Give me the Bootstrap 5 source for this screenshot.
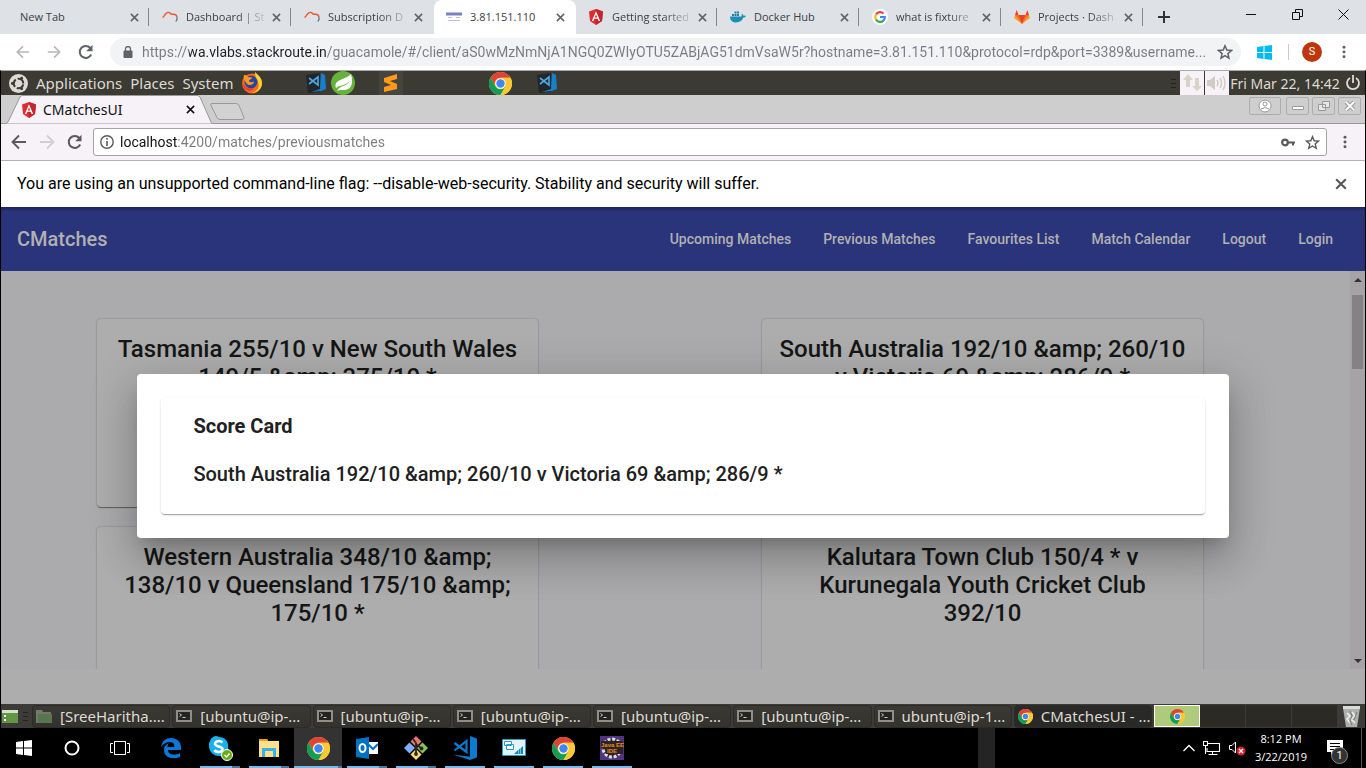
<!DOCTYPE html>
<html lang="en">
<head>
<meta charset="utf-8">
<meta name="viewport" content="width=device-width, initial-scale=1">
<title>CMatchesUI</title>
<link rel="stylesheet" href="https://cdn.jsdelivr.net/npm/bootstrap@5.3.0/dist/css/bootstrap.min.css">
<style>
  body { font-family: Roboto, "Noto Sans", sans-serif; height: 100vh; background: #000; overflow: hidden; }
  button { border: 0; padding: 0; background: none; color: inherit; display: inline-flex; align-items: center; justify-content: center; }
  svg { display: block; flex: none; }
  a { color: inherit; text-decoration: none; }

  /* outer browser */
  .host-tabs { height: 34px; background: #dee1e6; padding-left: 8px; color: #3c4043; font: 11px "Open Sans", sans-serif; }
  .host-tab { flex: 0 1 142px; min-width: 0; padding: 0 8px 0 12px; gap: 8px; border-right: 1px solid transparent; position: relative; }
  .host-tab .caption { flex: 1; overflow: hidden; white-space: nowrap; line-height: 18px; }
  .host-tab .fade-end { -webkit-mask-image: linear-gradient(90deg, #000 65%, transparent 105%); mask-image: linear-gradient(90deg, #000 65%, transparent 105%); }
  .host-tab.divided::after { content: ""; position: absolute; right: 0; top: 8px; height: 18px; width: 1px; background: #84878c; }
  .host-tab.current { background: #fff; border-radius: 8px 8px 0 0; }
  .host-tab button { width: 14px; height: 18px; margin-left: -4px; color: #5f6368; }
  .new-tab { margin-left: 14px; }
  .win-controls { color: #111; }
  .win-controls button { width: 46px; height: 28px; }
  .host-bar { height: 36px; background: #fff; padding: 0 12px; color: #5f6368; }
  .host-url { height: 28px; background: #f1f3f4; border-radius: 14px; padding: 0 8px 0 12px; }
  .bar-rule { width: 1px; height: 16px; background: #c8cacd; margin: 0 13px 0 16px; }
  .url-input { border: 0; outline: 0; background: transparent; padding: 0; min-width: 0; flex: 1; font: 14px Roboto, sans-serif; color: #777c82; text-overflow: ellipsis; }
  .host-url .url-input { background: linear-gradient(90deg, #777c82 47px, #202124 47px, #202124 184px, #777c82 184px); -webkit-background-clip: text; background-clip: text; -webkit-text-fill-color: transparent; }
  .inner-url .url-input { background: linear-gradient(90deg, #111 57px, #7c7b7d 57px); -webkit-background-clip: text; background-clip: text; -webkit-text-fill-color: transparent; }
  .avatar { width: 20px; height: 20px; border-radius: 50%; background: #bf360c; color: #fff; font-size: 11px; }
  .idle { color: #b6b7b9; }

  /* remote desktop */
  .remote { border-left: 1px solid #000; border-right: 1px solid #000; border-top: 1px solid #a9a9a9; min-height: 0; }
  .mate-top, .inner-tabs, .inner-bar, .infobar, .app-nav, .mate-bottom { flex: none; }
  .mate-top { height: 24px; background: #3b3a33; color: #dfdbd2; font: 15px "Noto Sans", sans-serif; }
  .mate-top .clock { font-size: 14px; width: 112px; text-align: center; white-space: nowrap; }
  .tray { width: 24px; height: 24px; background: #f7f2f7; }
  .inner-tabs { height: 29px; background: #cecece; border-bottom: 1px solid #999; }
  .inner-tab { width: 204px; height: 29px; position: relative; margin-left: 5px; padding: 0 15px; gap: 6px; color: #111; font: 14px "Noto Sans", sans-serif; }
  .inner-tab > svg.shape { position: absolute; left: 0; top: 0; }
  .inner-tab > :not(.shape) { position: relative; }
  .frame-set { padding: 2px 4px 0 0; gap: 3px; }
  .frame-btn { height: 18px; width: 23px; border: 1px solid #adadad; border-radius: 2px; }
  .frame-btn.wide { width: 32px; margin-right: 2px; }
  .inner-bar { height: 37px; background: #f7f2f7; border-bottom: 1px solid #b5b2b5; padding: 0 10px; color: #5a5a5a; }
  .inner-nav { gap: 12px; margin-right: 10px; }
  .inner-nav .idle { color: #d2cfd2; }
  .inner-url { height: 28px; background: #fff; border: 1px solid #a5a3a6; border-radius: 3px; padding: 0 6px; gap: 6px; }
  .infobar { height: 46px; background: #fff; padding: 0 18px 0 16px; color: #000; font-size: 16px; }

  /* application page */
  .app { background: #adadad; min-height: 0; position: relative; padding-bottom: 35px; font-weight: 500; }
  .app-nav { height: 64px; background: #2a347a; color: #b1b0b2; padding: 0 32px 0 16px; gap: 32px; font-size: 14px; box-shadow: inset 0 3px 3px -1px #1c2452; }
  .app-nav .brand { font-size: 20px; }
  .scroller { background: #abaaac; min-height: 0; overflow: hidden; flex: 1 1 0; }
  .match-grid { flex: 1; min-width: 0; display: grid; grid-template-columns: 1fr 1fr; column-gap: 224px; row-gap: 20px; padding: 48px 147px 0 96px; }
  .match-card { min-height: 188px; padding: 16px 17px; border-radius: 4px; background: #adadad; text-align: center; font-size: 24px; line-height: 28px; color: #151716; box-shadow: 0 2px 1px -1px rgba(0,0,0,.25), 0 1px 1px 0 rgba(0,0,0,.18), 0 0 2px 0 rgba(0,0,0,.3); }
  .match-card h2, .score-card h1, .score-card p { font: inherit; margin: 0; }
  .track { flex: none; width: 15px; background: #a5a3a6; padding: 5px 0 4px; }
  .thumb { width: 11px; height: 74px; background: #848285; margin-top: 11px; }
  .dialog-layer { position: absolute; inset: 0; }
  .dialog-box { width: 80%; padding: 24px; background: #fff; border-radius: 4px; box-shadow: 0 11px 15px -7px rgba(0,0,0,.2), 0 24px 38px 3px rgba(0,0,0,.14), 0 9px 46px 8px rgba(0,0,0,.12); }
  .score-card { padding: 16px 32px 28px; border-radius: 4px; font-size: 20px; line-height: 24px; color: #212121; box-shadow: 0 2px 1px -1px rgba(0,0,0,.2), 0 1px 1px 0 rgba(0,0,0,.14), 0 1px 3px 0 rgba(0,0,0,.12); }
  .score-card h1 { font-weight: 700; margin-bottom: 24px; }

  /* remote window list */
  .mate-bottom { height: 24px; background: #3c3b37; color: #dfdbd2; font: 15px "Noto Sans", sans-serif; }
  .win-task { flex: 1 1 0; min-width: 0; height: 23px; margin-right: 2px; padding: 0 3px; gap: 8px; border: 1px solid #2b2b27; border-radius: 4px; background: linear-gradient(#3a3934, #33322d); justify-content: flex-start; white-space: nowrap; overflow: hidden; }
  .win-task.current { background: #292a28; }
  .desk { width: 46px; height: 22px; background: #2b2a25; border-right: 1px solid #3c3b37; }
  .desk.current { background: #aecb7c; border: 1px solid #fff; }

  /* host taskbar */
  .taskbar { height: 40px; flex: none; background: #000; color: #fff; }
  .taskbar .tb { width: 48px; height: 40px; position: relative; margin-right: 1px; }
  .taskbar .sys { margin-right: 0; }
  .tb.running::after { content: ""; position: absolute; bottom: 0; left: 4px; right: 4px; height: 2px; background: #76b9ed; }
  .tb.many::after { background: linear-gradient(90deg, #76b9ed 80%, #4c7799 80%); }
  .tb.current { background: #333; }
  .tb.current::after { left: 0; right: 0; background: linear-gradient(90deg, #76b9ed 92%, #4c7799 92%); }
  .peek { width: 17px; height: 40px; background: #242424; margin-right: 188px; }
  .host-clock { font: 11px "Open Sans", sans-serif; line-height: 18px; text-align: center; width: 62px; }
  .notes-btn { width: 45px; height: 40px; }
  .notice { position: absolute; left: 19px; top: 19px; width: 17px; height: 17px; border-radius: 50%; background: #333; border: 1px solid #888; font-size: 11px; line-height: 15px; }
  .edge { border-right: 1px solid #555; width: 5px; height: 40px; margin-right: 4px; }
</style>
</head>
<body class="d-flex flex-column">

<svg width="0" height="0" class="position-absolute" aria-hidden="true">
  <symbol id="x" viewBox="0 0 10 10"><path d="M1 1l8 8M9 1L1 9" stroke="currentColor" stroke-width="1.700" fill="none"/></symbol>
  <symbol id="angular" viewBox="0 0 16 16"><path d="M8 0l7 2.500-1 9.500-6 4-6-4L1 2.500z" fill="#dd2c32"/><path d="M8 0l7 2.500-1 9.500-6 4z" fill="#c3272d"/><path d="M8 2.200L3.800 12h1.600l.9-2.200h3.400l.9 2.200h1.600zM8 5.200l1.200 3.200H6.800z" fill="#fff" fill-rule="evenodd"/></symbol>
  <symbol id="chrome" viewBox="0 0 24 24"><circle cx="12" cy="12" r="12" fill="#fbc934"/><path d="M1.600 6A12 12 0 0 1 22.400 6H12a6 6 0 0 0-5.200 9z" fill="#dc4437"/><path d="M1.600 6A12 12 0 0 0 12 24l5.200-9a6 6 0 0 1-10.400 0z" fill="#109d58"/><path d="M22.400 6H12a6 6 0 0 1 5.200 9L12 24A12 12 0 0 0 22.400 6z" fill="#fbc934"/><circle cx="12" cy="12" r="5.400" fill="#fff"/><circle cx="12" cy="12" r="4.400" fill="#4285f4"/></symbol>
  <symbol id="curve" viewBox="0 0 16 16"><path d="M.5 8.500C2 8 2.500 6 4 4.500S7.500 3 8.500 4.500 10.500 5 12 5.200s3 1.300 3 3.300" fill="none" stroke="#f0562d" stroke-width="1.400"/><path d="M15 8.500v2l-1.200 2" fill="none" stroke="#38808f" stroke-width="1.300"/></symbol>
  <symbol id="code" viewBox="0 0 24 24"><path d="M17 0l7 2.500v19L17 24 0 18.500l17 2.300z" fill="#0a7bd0"/><path d="M1.500 7L13.500 16V5L1.500 14.500" fill="none" stroke="#0a7bd0" stroke-width="2.200"/></symbol>
  <symbol id="codebox" viewBox="0 0 22 22"><path d="M1 3l14-2v19l-12 1z" fill="#22262a"/><path d="M16 1l4 2 1 14-5 2-10 1 9-3z" fill="#1581c9"/><path d="M4 6l9 7V5l-9 7" fill="none" stroke="#4aa8e4" stroke-width="1.600"/></symbol>
  <symbol id="term" viewBox="0 0 16 14"><path fill="#8f8f88" d="M0 1h16v12H0z"/><path fill="#242522" d="M2 3h12v8H2z"/><path d="M3.500 4.500l2 1.500-2 1.500M6.500 8.500h3" stroke="#ccc" fill="none"/></symbol>
  <symbol id="reload" viewBox="0 0 16 16"><path d="M13.200 10.500A6 6 0 1 1 12.300 4" fill="none" stroke="currentColor" stroke-width="2"/><path d="M14.500.8v6.400H8.200z" fill="currentColor"/></symbol>
  <symbol id="back" viewBox="0 0 16 16"><path d="M15 8H2M8 1.500L1.500 8 8 14.500" fill="none" stroke="currentColor" stroke-width="1.900"/></symbol>
  <symbol id="fwd" viewBox="0 0 16 16"><path d="M1 8h13M8 1.500L14.500 8 8 14.500" fill="none" stroke="currentColor" stroke-width="1.900"/></symbol>
  <symbol id="star" viewBox="0 0 16 16"><path d="M8 1.800l1.800 4.300 4.700.4-3.600 3.100 1.100 4.600L8 11.700l-4 2.500 1.100-4.600L1.500 6.500l4.700-.4z" fill="none" stroke="currentColor" stroke-width="1.500"/></symbol>
  <symbol id="dots" viewBox="0 0 4 16"><g fill="currentColor"><circle cx="2" cy="2.500" r="1.700"/><circle cx="2" cy="8" r="1.700"/><circle cx="2" cy="13.500" r="1.700"/></g></symbol>
</svg>

<header>
  <div class="host-tabs d-flex align-items-stretch">
    <div class="host-tab divided d-flex align-items-center"><a href="#" class="caption">New Tab</a><button aria-label="Close"><svg width="9" height="9"><use href="#x"/></svg></button></div>
    <div class="host-tab divided d-flex align-items-center"><svg width="16" height="16"><use href="#curve"/></svg><a href="#" class="caption fade-end">Dashboard | St</a><button aria-label="Close"><svg width="9" height="9"><use href="#x"/></svg></button></div>
    <div class="host-tab d-flex align-items-center"><svg width="16" height="16"><use href="#curve"/></svg><a href="#" class="caption fade-end">Subscription D</a><button aria-label="Close"><svg width="9" height="9"><use href="#x"/></svg></button></div>
    <div class="host-tab current d-flex align-items-center"><svg width="16" height="16" viewBox="0 0 16 16"><path d="M0 5h16" stroke="#7683c1" stroke-width="3"/><path d="M2 8.500h4M10 8.500h4M2 11.500h12" stroke="#bdc2dc"/></svg><a href="#" class="caption">3.81.151.110</a><button aria-label="Close"><svg width="9" height="9"><use href="#x"/></svg></button></div>
    <div class="host-tab divided d-flex align-items-center"><svg width="16" height="16"><use href="#angular"/></svg><a href="#" class="caption fade-end">Getting started</a><button aria-label="Close"><svg width="9" height="9"><use href="#x"/></svg></button></div>
    <div class="host-tab divided d-flex align-items-center"><svg width="16" height="16" viewBox="0 0 16 16"><path d="M0 7.500h11.500c.3-1.200 0-2 .6-2.800.8.500 1.200 1.200 1.300 2 1-.2 1.800 0 2.500.4-.5 1.200-1.500 1.500-2.500 1.500C12 12 9.500 13.500 6 13.500c-4 0-6-2.500-6-6z" fill="#1b8fb5"/><path d="M2 5h2v2H2zM4.500 5h2v2h-2zM7 5h2v2H7zM7 2.500h2v2H7zM4.500 2.500h2v2h-2z" fill="#2b7f9e"/></svg><a href="#" class="caption">Docker Hub</a><button aria-label="Close"><svg width="9" height="9"><use href="#x"/></svg></button></div>
    <div class="host-tab divided d-flex align-items-center"><svg width="16" height="16" viewBox="0 0 16 16"><circle cx="8" cy="8" r="8" fill="#fff"/><g fill="none" stroke-width="2.200"><path d="M4 5.500A4.800 4.800 0 0 1 11.500 4.500" stroke="#ea4335"/><path d="M4 5.500a4.800 4.800 0 0 0 0 5" stroke="#fbbc05"/><path d="M4 10.500a4.800 4.800 0 0 0 7.400 1.100" stroke="#34a853"/><path d="M11.400 11.600A4.600 4.600 0 0 0 12.800 8H8" stroke="#4285f4"/></g></svg><a href="#" class="caption fade-end">what is fixture</a><button aria-label="Close"><svg width="9" height="9"><use href="#x"/></svg></button></div>
    <div class="host-tab divided d-flex align-items-center"><svg width="16" height="16" viewBox="0 0 16 16"><path d="M8 15L0 9l1-3h14l1 3z" fill="#fca326"/><path d="M8 15L1 6h3.500zM8 15l7-9h-3.500z" fill="#fc6d26"/><path d="M8 15L4.500 6h7zM1 6l1.700-5 1.800 5zM15 6l-1.700-5-1.800 5z" fill="#e24329"/></svg><a href="#" class="caption fade-end">Projects · Dash</a><button aria-label="Close"><svg width="9" height="9"><use href="#x"/></svg></button></div>
    <button class="new-tab" aria-label="New tab"><svg width="12" height="12" viewBox="0 0 12 12"><path d="M6 0v12M0 6h12" stroke="#333" stroke-width="2"/></svg></button>
    <div class="win-controls d-flex ms-auto">
      <button aria-label="Minimise"><svg width="10" height="10"><path d="M0 5.500h10" stroke="currentColor"/></svg></button>
      <button aria-label="Restore"><svg width="11" height="11"><path d="M.5 3.500h7v7h-7zM3.500 3V.5h7v7H8" fill="none" stroke="currentColor"/></svg></button>
      <button aria-label="Close"><svg width="11" height="11"><path d="M.5.5l10 10M10.500.5l-10 10" stroke="currentColor"/></svg></button>
    </div>
  </div>
  <div class="host-bar d-flex align-items-center">
    <button class="me-3 ms-1 idle" aria-label="Back"><svg width="14" height="14"><use href="#back"/></svg></button>
    <button class="me-3 idle" aria-label="Forward"><svg width="16" height="14"><use href="#fwd"/></svg></button>
    <button class="me-3" aria-label="Reload"><svg width="16" height="16"><use href="#reload"/></svg></button>
    <div class="host-url d-flex align-items-center flex-fill gap-2">
      <svg width="12" height="12" viewBox="0 0 12 12"><path d="M2 5h8v6.500H2z" fill="#5f6368" stroke="#5f6368"/><path d="M3.500 5V3a2.500 2.500 0 0 1 5 0v2" fill="none" stroke="#5f6368" stroke-width="1.300"/></svg>
      <input class="url-input" type="text" aria-label="Address" value="https://wa.vlabs.stackroute.in/guacamole/#/client/aS0wMzNmNjA1NGQ0ZWIyOTU5ZABjAG51dmVsaW5r?hostname=3.81.151.110&amp;protocol=rdp&amp;port=3389&amp;username...">
      <button aria-label="Bookmark"><svg width="16" height="16"><use href="#star"/></svg></button>
    </div>
    <svg class="ms-3 ps-0" width="15" height="15" viewBox="0 0 15 15"><path d="M0 2l6.500-1v6H0zM7.500.9L15 0v7H7.500zM0 8h6.500v6L0 13zM7.500 8H15v7l-7.500-1z" fill="#00bcf2"/></svg>
    <span class="bar-rule"></span>
    <button class="avatar me-3" aria-label="Profile">S</button>
    <button class="ms-1 me-2" aria-label="Menu"><svg width="4" height="14"><use href="#dots"/></svg></button>
  </div>
</header>

<div class="remote d-flex flex-column flex-fill">
  <div class="mate-top d-flex align-items-center">
    <svg class="ms-2 me-2" width="19" height="19" viewBox="0 0 20 20"><circle cx="10" cy="10" r="10" fill="#dfdbd2"/><circle cx="10" cy="10" r="5" fill="none" stroke="#3b3a33" stroke-width="2.200" stroke-dasharray="8.500 2" stroke-dashoffset="-1"/><g fill="#3b3a33"><circle cx="3.500" cy="10" r="1.500"/><circle cx="13.300" cy="4.400" r="1.500"/><circle cx="13.300" cy="15.600" r="1.500"/></g></svg>
    <a href="#">Applications</a><a href="#" class="ms-2">Places</a><a href="#" class="ms-2">System</a>
    <svg class="ms-2" width="22" height="22" viewBox="0 0 22 22"><circle cx="11" cy="11.500" r="10" fill="#ff6a1a"/><path d="M14 0c3 3 7.500 6 7 12-.5 5-5 9-10 9 6-2 8-6 6-11-1-3-3-5-3-10z" fill="#ffd02b"/><circle cx="10" cy="10" r="6.500" fill="#27479f"/><path d="M3 3c2 0 3 .5 4 2l4 .5c0 2-3 2-3 3 0 2 3 2 5 1 0 4-6 5-8 1-2-2-3-4-2-7.500z" fill="#ff9522"/><path d="M1 9c2 7 7 8 12 7-3 5-11 4-12-7z" fill="#ed3e32"/></svg>
    <svg style="margin-left:42px" width="22" height="22"><use href="#codebox"/></svg>
    <svg class="ms-1" width="24" height="24" viewBox="0 0 24 24"><circle cx="12" cy="12" r="12" fill="#66b33b"/><path d="M20 3c2 8 2 16-8 16-3 0-5 0-6 1 3-6 9-4 13-10-5 5-10 4-14 7C2 8 15 9 20 3z" fill="#fff"/></svg>
    <svg style="margin-left:24px" width="24" height="24" viewBox="0 0 24 24"><path d="M0 0h24v24H0z" fill="#45443f"/><path d="M5 7l13-4v5l-7 2 7 3v5L5 21v-5l7-2-7-3z" fill="#ff9a1a"/></svg>
    <svg style="margin-left:86px" width="23" height="23"><use href="#chrome"/></svg>
    <svg style="margin-left:24px" width="22" height="22"><use href="#codebox"/></svg>
    <svg class="ms-auto me-1" width="5" height="10"><path d="M0 1.500h5M0 5.500h5M0 9.500h5" stroke="#24231f"/></svg>
    <span class="tray d-flex align-items-center justify-content-center"><svg width="20" height="18" viewBox="0 0 20 18"><path d="M6 0l5 6H8v7H4V6H1zM15 17l-5-5h3V4h4v8h3z" fill="#d8d2c9"/></svg></span>
    <span class="tray d-flex align-items-center justify-content-center" style="margin-left:1px"><svg width="20" height="18" viewBox="0 0 20 18"><path d="M0 6h3l5-4v14l-5-4H0z" fill="#d0cbc4"/><path d="M10 6q2 3 0 6M13 4q3 5 0 10M16 2q4 7 0 14" fill="none" stroke="#d0cbc4" stroke-width="1.500"/></svg></span>
    <span class="clock">Fri Mar 22, 14:42</span>
    <svg class="mx-1" width="16" height="16" viewBox="0 0 16 16"><path d="M5 3a6 6 0 1 0 6 0M8 0v8" fill="none" stroke="#dfdbd2" stroke-width="1.800"/></svg>
  </div>

  <div class="inner-tabs d-flex">
    <div class="inner-tab d-flex align-items-center">
      <svg class="shape" width="206" height="29" viewBox="0 0 206 29"><path d="M0 28.500L2 27 14 2Q15 .5 17 .5H191Q193 .5 194 2L205 27l1 1.500" fill="#f7f2f7" stroke="#999"/></svg>
      <svg width="16" height="16"><use href="#angular"/></svg><a href="#" class="flex-fill">CMatchesUI</a>
      <button aria-label="Close tab"><svg width="9" height="9"><use href="#x"/></svg></button>
    </div>
    <svg class="mt-2" width="36" height="18" viewBox="0 0 36 18"><path d="M2 .5h24q2 0 3 2l5 12q0 2-2 2H10q-2 0-3-2L1 2.500Q0 .5 2 .5z" fill="#d2d2d2" stroke="#999"/></svg>
    <div class="frame-set d-flex ms-auto">
      <button class="frame-btn wide" aria-label="User"><svg width="14" height="14" viewBox="0 0 14 14"><circle cx="7" cy="7" r="6" fill="#fff" stroke="#999"/><circle cx="7" cy="5" r="2" fill="none" stroke="#999"/><path d="M3 10q4-3 8 0" fill="none" stroke="#999"/></svg></button>
      <button class="frame-btn" aria-label="Minimise"><svg width="12" height="10"><path d="M.5 5.500h11v3H.5z" fill="#fff" stroke="#999"/></svg></button>
      <button class="frame-btn" aria-label="Restore"><svg width="12" height="10"><path d="M4.500.5h7v6h-7zM.5 3.500h7v6h-7z" fill="#fff" fill-opacity=".5" stroke="#999"/></svg></button>
      <button class="frame-btn" aria-label="Close"><svg width="12" height="10"><path d="M2 1l8 8M10 1L2 9" stroke="#999" stroke-width="4"/><path d="M2 1l8 8M10 1L2 9" stroke="#fff" stroke-width="2"/></svg></button>
    </div>
  </div>
  <div class="inner-bar d-flex align-items-center">
    <div class="inner-nav d-flex">
      <button aria-label="Back"><svg width="16" height="16"><use href="#back"/></svg></button>
      <button class="idle" aria-label="Forward"><svg width="16" height="16"><use href="#fwd"/></svg></button>
      <button aria-label="Reload"><svg width="16" height="16"><use href="#reload"/></svg></button>
    </div>
    <div class="inner-url d-flex align-items-center flex-fill me-3">
      <svg width="14" height="14" viewBox="0 0 14 14"><circle cx="7" cy="7" r="6.200" fill="none" stroke="#5a5a5a" stroke-width="1.400"/><path d="M7 6v5M7 3v1.700" stroke="#5a5a5a" stroke-width="1.600"/></svg>
      <input class="url-input" type="text" aria-label="Address" value="localhost:4200/matches/previousmatches">
      <svg class="me-1" width="14" height="9" viewBox="0 0 14 9"><circle cx="4" cy="4.500" r="2.800" fill="none" stroke="#5a5a5a" stroke-width="2.200"/><path d="M7 3.500h7v2h-1v2h-2v-2H7z" fill="#5a5a5a"/></svg>
      <button aria-label="Bookmark"><svg width="15" height="15"><use href="#star"/></svg></button>
    </div>
    <button aria-label="Menu" class="me-1 pe-1"><svg width="4" height="14"><use href="#dots"/></svg></button>
  </div>
  <div class="infobar d-flex align-items-center justify-content-between">
    <span>You are using an unsupported command-line flag: --disable-web-security. Stability and security will suffer.</span>
    <button aria-label="Dismiss" style="color:#555"><svg width="12" height="12"><use href="#x"/></svg></button>
  </div>

  <main class="app d-flex flex-column flex-fill">
    <nav class="app-nav d-flex align-items-center">
      <a href="#" class="brand me-auto">CMatches</a>
      <a href="#">Upcoming Matches</a><a href="#">Previous Matches</a><a href="#">Favourites List</a><a href="#">Match Calendar</a><a href="#">Logout</a><a href="#">Login</a>
    </nav>
    <div class="scroller d-flex">
      <div class="match-grid align-content-start">
        <article class="match-card"><h2>Tasmania 255/10 v New South Wales 149/5 &amp;amp; 375/10 *</h2></article>
        <article class="match-card"><h2>South Australia 192/10 &amp;amp; 260/10 v Victoria 69 &amp;amp; 286/9 *</h2></article>
        <article class="match-card"><h2>Western Australia 348/10 &amp;amp; 138/10 v Queensland 175/10 &amp;amp; 175/10 *</h2></article>
        <article class="match-card"><h2>Kalutara Town Club 150/4 * v Kurunegala Youth Cricket Club 392/10</h2></article>
      </div>
      <div class="track d-flex flex-column align-items-center">
        <svg width="8" height="8"><path d="M0 6l4-4 4 4z" fill="#333"/></svg>
        <div class="thumb"></div>
        <svg class="mt-auto" width="8" height="8"><path d="M0 2l4 4 4-4z" fill="#333"/></svg>
      </div>
    </div>
    <div class="dialog-layer d-flex align-items-center justify-content-center">
      <section class="dialog-box" role="dialog" aria-labelledby="score-title">
        <div class="score-card"><h1 id="score-title">Score Card</h1><p>South Australia 192/10 &amp;amp; 260/10 v Victoria 69 &amp;amp; 286/9 *</p></div>
      </section>
    </div>
  </main>

  <div class="mate-bottom d-flex align-items-center">
    <svg width="18" height="18" viewBox="0 0 18 18"><path d="M1 3h16v13H1z" fill="#629544"/><path d="M1 3h16v3H1z" fill="#d8e0c8"/><path d="M3 8h2v2H3zM3 12h2v2H3z" fill="#fff"/></svg>
    <svg class="mx-1" width="5" height="10"><path d="M0 1.500h5M0 5.500h5M0 9.500h5" stroke="#24231f"/></svg>
    <button class="win-task"><svg width="16" height="14" viewBox="0 0 16 14"><path d="M0 1h6l1 2h8v2H3v9H0z" fill="#6f7a68"/><path d="M2 5h14v9H2z" fill="#57764d"/></svg>[SreeHaritha....</button>
    <button class="win-task"><svg width="16" height="14"><use href="#term"/></svg>[ubuntu@ip-...</button>
    <button class="win-task"><svg width="16" height="14"><use href="#term"/></svg>[ubuntu@ip-...</button>
    <button class="win-task"><svg width="16" height="14"><use href="#term"/></svg>[ubuntu@ip-...</button>
    <button class="win-task"><svg width="16" height="14"><use href="#term"/></svg>[ubuntu@ip-...</button>
    <button class="win-task"><svg width="16" height="14"><use href="#term"/></svg>[ubuntu@ip-...</button>
    <button class="win-task"><svg width="16" height="14"><use href="#term"/></svg>ubuntu@ip-1...</button>
    <button class="win-task current"><svg width="15" height="15"><use href="#chrome"/></svg>CMatchesUI - ...</button>
    <button class="desk current" aria-label="Workspace 1"><svg width="15" height="15"><use href="#chrome"/></svg></button>
    <button class="desk" aria-label="Workspace 2"></button><button class="desk" aria-label="Workspace 3"></button><button class="desk" aria-label="Workspace 4"></button>
    <svg class="mx-1" width="19" height="22" viewBox="0 0 19 22"><path d="M1 3h17l-3 19H4z" fill="#aeb0ae"/><path d="M1 1h17v3H1z" fill="#d9dbd9"/><path d="M5 8l3 3-3 3 3 4M10 7l3 4-4 3 4 4" stroke="#eee" stroke-width="1.500" fill="none"/><path d="M8 6l2 5-2 5 2 4M15 7l-3 8" stroke="#777" fill="none"/></svg>
  </div>
</div>

<footer class="taskbar d-flex align-items-center">
  <button class="tb sys" aria-label="Start"><svg width="16" height="16" viewBox="0 0 16 16"><path d="M0 2l7-1v6.500H0zM8 1l8-1v7.500H8zM0 8.500h7V15l-7-1zM8 8.500h8V16l-8-1z" fill="#fff"/></svg></button>
  <button class="tb sys" aria-label="Cortana"><svg width="16" height="16"><circle cx="8" cy="8" r="6.500" fill="none" stroke="#fff" stroke-width="2"/></svg></button>
  <button class="tb sys" aria-label="Task view"><svg width="20" height="14"><path d="M4.500.5h11v13h-11zM3 2.500H.5v9H3M17 2.500h2.500v9H17" fill="none" stroke="#fff"/></svg></button>
  <button class="tb" style="margin-left:3px" aria-label="Edge"><svg width="20" height="20" viewBox="0 0 20 20"><path d="M0 9C1 3 5 0 10 0c6 0 10 4 10 9v3H7c0 5 7 6 12 3v4c-7 3-16 1-16-7 0-4 3-6 5-7-1 1-1.500 2-1.500 4H13.500C14 2 4 3 0 9z" fill="#0a78d7"/></svg></button>
  <button class="tb running many" aria-label="Skype"><svg width="26" height="26" viewBox="0 0 26 26"><path d="M3 6a6 6 0 0 1 9-4 9 9 0 0 1 9 11 6 6 0 0 1-8 8A10 10 0 0 1 2 11a7 7 0 0 1 1-5z" fill="#19b0f0"/><path d="M15.500 7.500C13 5 8 6 8 9s8 2 7.500 5.500C15 18 9 17.500 7.500 15" fill="none" stroke="#fff" stroke-width="2.500"/><circle cx="20" cy="20" r="5.500" fill="#6bac13" stroke="#fff"/><path d="M17.500 20l2 2 3-3.500" fill="none" stroke="#fff" stroke-width="1.400"/></svg></button>
  <button class="tb running many" aria-label="File Explorer"><svg width="22" height="20" viewBox="0 0 22 20"><path d="M1 1h8l1 2h11v16H1z" fill="#fbe18f"/><path d="M1 1h8l1 2H1z" fill="#e9a800"/><path d="M4 19v-9h14v9h-3v-6H7v6z" fill="#39b1e3"/></svg></button>
  <button class="tb running many current" aria-label="Chrome"><svg width="23" height="23"><use href="#chrome"/></svg></button>
  <button class="tb running many" aria-label="Outlook"><svg width="22" height="22" viewBox="0 0 22 22"><path d="M11 5h11v12H11z" fill="#fff"/><path d="M0 2l13-2v22L0 20z" fill="#0072c6"/><path d="M12 7l5 5 5-5" fill="none" stroke="#0072c6" stroke-width="2"/><ellipse cx="6.500" cy="11" rx="3" ry="4" fill="none" stroke="#fff" stroke-width="2"/></svg></button>
  <button class="tb running many" aria-label="Git"><svg width="24" height="24" viewBox="0 0 24 24"><path d="M12 0l5.500 5.500L12 11 6.500 5.500z" fill="#e87474"/><path d="M5.500 6.500L11 12l-5.500 5.500L0 12z" fill="#80aef8"/><path d="M18.500 6.500L24 12l-5.500 5.500L13 12z" fill="#87c35a"/><path d="M12 13l5.500 5.500L12 24l-5.500-5.500z" fill="#fbdc73"/><path d="M9 3l3 4v11M12 8l5 4" fill="none" stroke="#322" stroke-width="1.800"/><circle cx="12" cy="18" r="1.900" fill="#322"/><circle cx="17.500" cy="12.500" r="1.900" fill="#322"/></svg></button>
  <button class="tb running" aria-label="Code"><svg width="24" height="24"><use href="#code"/></svg></button>
  <button class="tb running" aria-label="Remote tool"><svg width="24" height="18" viewBox="0 0 24 18"><path d="M.5.5h23v16H.5z" fill="#e3f3f8" stroke="#2a9ac4"/><path d="M2.500 2.500h7v4h-7zM4.500 5.500h7v5h-7z" fill="#fff" stroke="#2a9ac4"/><path d="M12 15l4-4v4zM16.500 15v-4l1.500-1.500V15zM18.500 15V9.500L21 7v8z" fill="#1685b2"/></svg></button>
  <button class="tb running" aria-label="Chrome profile"><svg width="23" height="23"><use href="#chrome"/></svg></button>
  <button class="tb running" aria-label="Java EE IDE"><svg width="24" height="24" viewBox="0 0 24 24"><path d="M0 0h24v24H0z" fill="#51347f"/><circle cx="12" cy="12" r="9" fill="#292426" stroke="#ddd" stroke-width="3" stroke-dasharray="3 1.700"/><path d="M1 5h22v13H6v-6H1z" fill="#292426"/><g fill="#f08a1c" font-family="Liberation Sans" font-weight="700" font-size="6"><text x="1" y="11">Java EE</text><text x="7" y="17">IDE</text></g></svg></button>
  <div class="peek ms-auto"></div>
  <button aria-label="Show hidden icons"><svg width="12" height="8"><path d="M.5 7L6 1.500 11.500 7" fill="none" stroke="#fff" stroke-width="1.300"/></svg></button>
  <svg class="ms-2" width="18" height="15" viewBox="0 0 18 15"><path d="M5 2.500h11.500v8H4V7M9.500 11v2.500M5.500 13.500h9M.5.5h4v4h-4zM2.500 5v8" fill="none" stroke="#fff" stroke-width="1.100"/></svg>
  <svg class="ms-2" width="17" height="16" viewBox="0 0 17 16"><path d="M.5 5.500H3L6.500 2v11L3 9.500H.5z" fill="none" stroke="#fff"/><circle cx="12" cy="11" r="4.500" fill="#d6202f"/><path d="M10 9l4 4M14 9l-4 4" stroke="#fff" stroke-width="1.300"/></svg>
  <div class="host-clock ms-1">8:12 PM<br>3/22/2019</div>
  <button class="notes-btn position-relative" aria-label="Notifications"><svg width="16" height="17" viewBox="0 0 16 17"><path d="M0 0h16v12H7l-3 4v-4H0z" fill="#fff"/><path d="M3 3.500h10M3 6.500h10M3 9.500h6" stroke="#000"/></svg><span class="notice">1</span></button>
  <div class="edge"></div>
</footer>

<script src="https://cdn.jsdelivr.net/npm/bootstrap@5.3.0/dist/js/bootstrap.bundle.min.js"></script>
</body>
</html>
